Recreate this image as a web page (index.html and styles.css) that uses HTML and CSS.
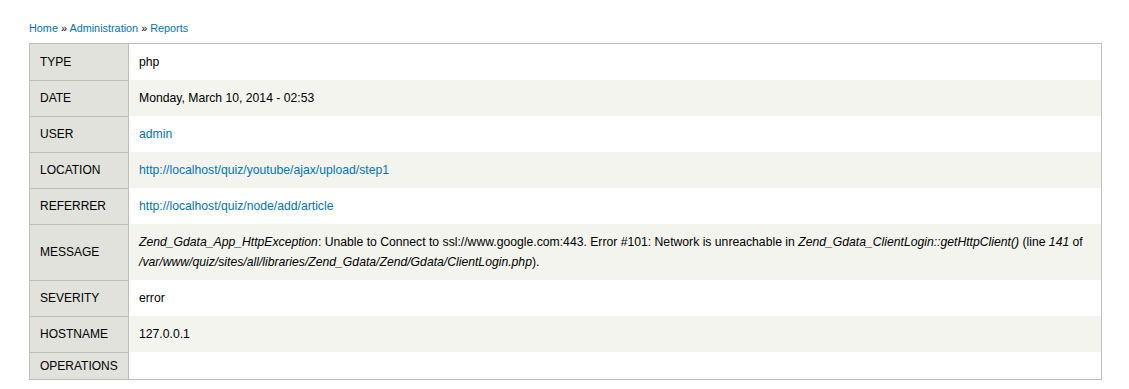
FILE: index.html
```html
<!DOCTYPE html>
<html lang="en">
<head>
  <meta charset="UTF-8" />
  <title>Details | Reports</title>
  <link rel="stylesheet" href="styles.css">
</head>
<body>
  <div class="page">
    <div class="breadcrumb">
      <a href="#">Home</a> » <a href="#">Administration</a> » <a href="#">Reports</a>
    </div>

    <table class="dblog-event">
      <tbody>
        <tr>
          <th>Type</th>
          <td>php</td>
        </tr>
        <tr class="even">
          <th>Date</th>
          <td>Monday, March 10, 2014 - 02:53</td>
        </tr>
        <tr>
          <th>User</th>
          <td><a href="#">admin</a></td>
        </tr>
        <tr class="even">
          <th>Location</th>
          <td><a href="#">http://localhost/quiz/youtube/ajax/upload/step1</a></td>
        </tr>
        <tr>
          <th>Referrer</th>
          <td><a href="#">http://localhost/quiz/node/add/article</a></td>
        </tr>
        <tr class="even">
          <th>Message</th>
          <td><em>Zend_Gdata_App_HttpException</em>: Unable to Connect to ssl://www.google.com:443. Error #101: Network is unreachable in <em>Zend_Gdata_ClientLogin::getHttpClient()</em> (line <em>141</em> of <em>/var/www/quiz/sites/all/libraries/Zend_Gdata/Zend/Gdata/ClientLogin.php</em>).</td>
        </tr>
        <tr>
          <th>Severity</th>
          <td>error</td>
        </tr>
        <tr class="even">
          <th>Hostname</th>
          <td>127.0.0.1</td>
        </tr>
        <tr>
          <th>Operations</th>
          <td></td>
        </tr>
      </tbody>
    </table>
  </div>
</body>
</html>
```

FILE: styles.css
```css
/* Base */
body {
  margin: 0;
  background: #fff;
  color: #000;
  font-family: "Liberation Sans", Arial, sans-serif;
  font-size: 12.2px;
  line-height: 20px;
}

a {
  color: #0074bd;
  text-decoration: none;
}

.page {
  padding: 18px 27px 0 29px;
}

/* Breadcrumb */
.breadcrumb {
  font-size: 10.85px;
  line-height: 20px;
  margin-bottom: 5px;
}

/* Event details table */
.dblog-event {
  width: 100%;
  border-collapse: collapse;
  border: 1px solid #bebfb9;
}

.dblog-event th {
  width: 78px;
  padding: 3px 10px;
  text-align: left;
  font-weight: normal;
  font-size: 12px;
  text-transform: uppercase;
  background: #e1e2dc;
  border-right: 1px solid #bebfb9;
  border-bottom: 1px solid #bebfb9;
}

.dblog-event td {
  padding: 8px 10px;
}

.dblog-event tr.even td {
  background: #f3f4ee;
}
```
